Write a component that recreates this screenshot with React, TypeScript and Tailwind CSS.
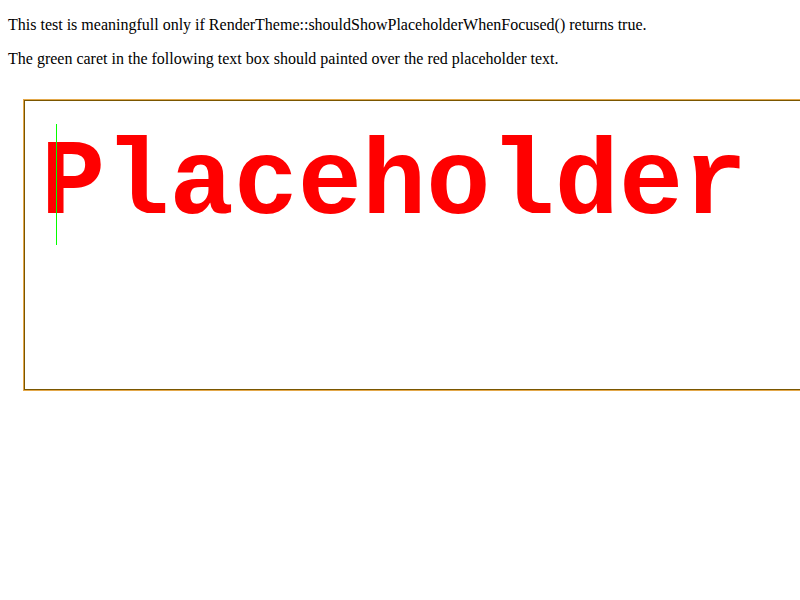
import React from "react";

export default function App() {
  return (
    <div className="m-2 text-black font-['Liberation_Serif',serif] text-[16px] leading-[18px]">
      <p className="my-4">
        This test is meaningfull only if RenderTheme::shouldShowPlaceholderWhenFocused() returns true.
      </p>
      <p className="my-4">
        The green caret in the following text box should painted over the red placeholder text.
      </p>
      <div className="relative ml-4 mt-[32px] h-[290px] w-[800px] border border-[#7a5600] outline outline-1 outline-[#e3a84a]">
        <div className="pt-[23px] pl-[16px] font-['Liberation_Mono',monospace] font-bold text-[107px] leading-[normal] text-[#ff0000] whitespace-nowrap">
          Placeholder
        </div>
        <div className="absolute left-[31px] top-[23px] h-[121px] w-px bg-[#00ff00]" />
      </div>
    </div>
  );
}
